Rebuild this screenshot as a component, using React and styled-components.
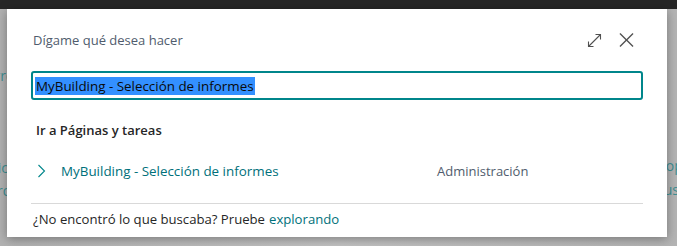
import React from 'react';
import styled, { createGlobalStyle } from 'styled-components';

const GlobalStyle = createGlobalStyle`
  html, body {
    margin: 0;
    padding: 0;
    background: #bcbcbc;
  }
  * { box-sizing: border-box; }
`;

const Page = styled.div`
  position: relative;
  width: 677px;
  height: 246px;
  overflow: hidden;
  background: linear-gradient(90deg, #b2b2b2 0%, #c2c2c2 50%, #b4b4b4 100%);
  font-family: 'Open Sans', 'Noto Sans', sans-serif;
`;

const TopBar = styled.div`
  height: 9px;
  background: #262626;
`;

// the dimmed page behind the dialog, only its edges show
const Backdrop = styled.div`
  display: flex;
  justify-content: space-between;
  padding-top: 58px;
  color: #3f8f93;
  font-size: 14px;
`;

const BackdropColumn = styled.div`
  display: flex;
  flex-direction: column;
  align-items: ${p => (p.right ? 'flex-start' : 'flex-end')};
  margin: ${p => (p.right ? '0 -40px 0 0' : '0 0 0 -40px')};
  width: 60px;
`;

const BackdropLine = styled.div`
  height: ${p => p.h}px;
  line-height: ${p => p.h}px;
  white-space: nowrap;
`;

const Dialog = styled.div`
  position: absolute;
  left: 7px;
  top: 9px;
  width: 660px;
  height: 228px;
  background: #fff;
  box-shadow: 0 2px 10px rgba(0, 0, 0, 0.35);
  padding: 0 24px;
  display: flex;
  flex-direction: column;
`;

const Header = styled.div`
  display: flex;
  align-items: center;
  justify-content: space-between;
  height: 62px;
  padding: 0 9px 0 2px;
`;

const Title = styled.div`
  font-size: 13px;
  color: #505c6d;
`;

const HeaderActions = styled.div`
  display: flex;
  align-items: center;
  gap: 17px;
`;

const IconButton = styled.button`
  width: 15px;
  height: 15px;
  padding: 0;
  border: none;
  background: none;
  display: flex;
  align-items: center;
  justify-content: center;
  color: #505050;
`;

const SearchBox = styled.div`
  height: 29px;
  border: 2px solid #00868b;
  border-radius: 3px;
  display: flex;
  align-items: center;
  padding-left: 2px;
`;

const Selected = styled.span`
  background: #3390ff;
  color: #0a0a0a;
  font-size: 13.4px;
  line-height: 18px;
  padding: 0 1px;
`;

const SectionTitle = styled.div`
  height: 56px;
  display: flex;
  align-items: center;
  padding-left: 5px;
  padding-top: 4px;
  font-size: 13px;
  font-weight: 600;
  color: #262626;
`;

const ResultRow = styled.div`
  display: flex;
  align-items: center;
  height: 26px;
  margin-top: 2px;
  padding-left: 6px;
`;

const Chevron = styled.span`
  width: 24px;
  display: flex;
  align-items: center;
  color: #00868b;
`;

const ResultName = styled.a`
  width: 376px;
  font-size: 13.4px;
  color: #00707a;
  text-decoration: none;
`;

const ResultGroup = styled.span`
  font-size: 13px;
  color: #505c6d;
`;

const Divider = styled.div`
  margin-top: 19px;
  height: 1px;
  background: #d9d9d9;
`;

const Footer = styled.div`
  height: 30px;
  display: flex;
  align-items: center;
  padding-left: 2px;
  font-size: 13.15px;
  color: #262626;
`;

const Link = styled.a`
  color: #00707a;
  text-decoration: none;
  margin-left: 4px;
`;

const ExpandIcon = () => (
  <svg width="15" height="15" viewBox="0 0 15 15" fill="none" stroke="currentColor" strokeWidth="1.1">
    <path d="M1.5 13.5 L13.5 1.5" />
    <path d="M8.5 1.5 H13.5 V6.5" />
    <path d="M1.5 8.5 V13.5 H6.5" />
  </svg>
);

const CloseIcon = () => (
  <svg width="16" height="16" viewBox="0 0 16 16" fill="none" stroke="currentColor" strokeWidth="1.4">
    <path d="M1 1 L15 15" />
    <path d="M15 1 L1 15" />
  </svg>
);

const ChevronIcon = () => (
  <svg width="9" height="14" viewBox="0 0 9 14" fill="none" stroke="currentColor" strokeWidth="1.1">
    <path d="M1.5 1 L7.5 7 L1.5 13" />
  </svg>
);

export default function App() {
  return (
    <>
      <GlobalStyle />
      <Page>
        <TopBar />
        <Backdrop>
          <BackdropColumn>
            <BackdropLine h={18}>Error</BackdropLine>
            <BackdropLine h={72} />
            <BackdropLine h={22}>Servicio</BackdropLine>
            <BackdropLine h={24}>Arqu</BackdropLine>
          </BackdropColumn>
          <BackdropColumn right>
            <BackdropLine h={18} />
            <BackdropLine h={70} />
            <BackdropLine h={22}>Copy</BackdropLine>
            <BackdropLine h={26}>susc</BackdropLine>
          </BackdropColumn>
        </Backdrop>
        <Dialog>
          <Header>
            <Title>Dígame qué desea hacer</Title>
            <HeaderActions>
              <IconButton aria-label="Expandir"><ExpandIcon /></IconButton>
              <IconButton aria-label="Cerrar"><CloseIcon /></IconButton>
            </HeaderActions>
          </Header>
          <SearchBox>
            <Selected>MyBuilding - Selección de informes</Selected>
          </SearchBox>
          <SectionTitle>Ir a Páginas y tareas</SectionTitle>
          <ResultRow>
            <Chevron><ChevronIcon /></Chevron>
            <ResultName href="#">MyBuilding - Selección de informes</ResultName>
            <ResultGroup>Administración</ResultGroup>
          </ResultRow>
          <Divider />
          <Footer>
            ¿No encontró lo que buscaba? Pruebe<Link href="#">explorando</Link>
          </Footer>
        </Dialog>
      </Page>
    </>
  );
}
